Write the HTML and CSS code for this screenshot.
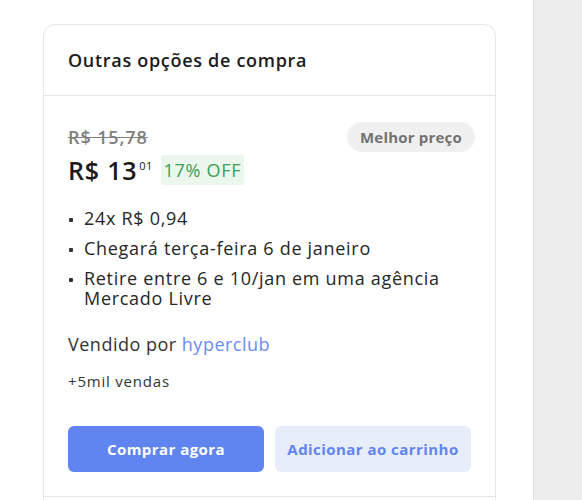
FILE: index.html
```html
<!DOCTYPE html>
<html lang="pt-BR">
<head>
    <meta charset="UTF-8">
    <title>Outras opções de compra</title>
    <link rel="stylesheet" href="styles.css">
</head>
<body>
    <div class="page">
        <main class="main">
            <section class="card">
                <div class="card-header">Outras opções de compra</div>
                <div class="offer">
                    <div class="price-top">
                        <div class="price-col">
                            <div class="old-price">R$ 15,78</div>
                            <div class="price-row">
                                <span class="price">R$ 13<sup class="cents">01</sup></span>
                                <span class="discount">17% OFF</span>
                            </div>
                        </div>
                        <span class="best">Melhor preço</span>
                    </div>

                    <ul class="details">
                        <li>24x R$ 0,94</li>
                        <li>Chegará terça-feira 6 de janeiro</li>
                        <li>Retire entre 6 e 10/jan em uma agência Mercado Livre</li>
                    </ul>

                    <p class="seller">Vendido por <a href="#">hyperclub</a></p>
                    <p class="sales">+5mil vendas</p>

                    <div class="actions">
                        <button class="btn btn-primary">Comprar agora</button>
                        <button class="btn btn-secondary">Adicionar ao carrinho</button>
                    </div>
                </div>
                <div class="offer next"></div>
            </section>
        </main>
        <aside class="side"></aside>
    </div>
</body>
</html>
```

FILE: styles.css
```css
body {margin: 0; font-family: "Open Sans", sans-serif; color: #1f1f1f; background: #fff; letter-spacing: 0.6px;}
.page {display: flex; min-height: 500px; overflow: hidden;}
.main {width: 533px; padding: 24px 37px 0 43px; box-sizing: border-box;}
.side {flex: 1; background: #ededed; border-left: 1px solid #e2e2e2;}

/* card */
.card {border: 1px solid #e6e6e6; border-radius: 12px; background: #fff;}
.card-header {height: 70px; padding: 0 24px; display: flex; align-items: center; font-size: 18px; font-weight: 600; letter-spacing: 0.7px; color: #1a1a1a; border-bottom: 1px solid #e6e6e6;}
.offer {padding: 26px 24px 24px; border-bottom: 1px solid #e6e6e6;}
.offer.next {height: 80px; border-bottom: none;}

.price-top {display: flex; justify-content: space-between; align-items: flex-start;}
.old-price {font-size: 18px; line-height: 30px; color: #808080; font-weight: 600; letter-spacing: 0.9px; text-decoration: line-through;}
.price-row {display: flex; align-items: center; gap: 8px; margin-top: 3px;}
.price {font-size: 25px; line-height: 30px; font-weight: 600; color: #1a1a1a; letter-spacing: 0.8px;}
.cents {font-size: 11px; font-weight: 500; vertical-align: 10px; line-height: 0; margin-left: 2px; letter-spacing: 0.3px;}
.discount {background: #ebf6ec; color: #3c9f55; font-size: 18px; font-weight: 500; line-height: 30px; padding: 0 3px; border-radius: 3px; letter-spacing: 0.7px;}
.best {background: #f0f0f0; color: #737373; font-size: 15px; font-weight: 700; line-height: 30px; padding: 0 13px; border-radius: 15px; margin-right: -4px; letter-spacing: 0.2px;}

.details {list-style: none; margin: 23px 0 0; padding: 0;}
.details li {position: relative; padding-left: 16px; font-size: 18px; line-height: 20px; margin-bottom: 10px; color: #262626; letter-spacing: 0.7px;}
.details li::before {content: ""; position: absolute; left: 1px; top: 10px; width: 4px; height: 4px; border-radius: 1px; background: #333;}
.details li:last-child {margin-bottom: 0;}

.seller {margin: 26px 0 0; font-size: 18px; line-height: 20px; color: #333; letter-spacing: 0.5px;}
.seller a {color: #6b8cf3; text-decoration: none;}
.sales {margin: 17px 0 0; font-size: 15px; line-height: 20px; color: #333; letter-spacing: 0.8px;}

.actions {display: flex; gap: 11px; margin-top: 35px;}
.btn {flex: 1; height: 46px; border: 0; border-radius: 6px; font-family: inherit; font-size: 15px; font-weight: 700; letter-spacing: 0.45px;}
.btn-primary {background: #6084f0; color: #fff;}
.btn-secondary {background: #e8edfa; color: #6084f0;}
```
